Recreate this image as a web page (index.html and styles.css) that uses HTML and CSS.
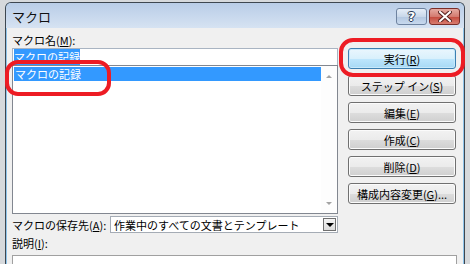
FILE: index.html
```html
<!DOCTYPE html>
<html lang="ja">
<head>
    <meta charset="UTF-8">
    <title>マクロ</title>
    <link rel="stylesheet" href="styles.css">
</head>
<body>
    <div class="window">
        <div class="titlebar">
            <span class="title">マクロ</span>
            <div class="caption-buttons">
                <button class="cap help">?</button>
                <button class="cap close">
                    <svg width="14" height="11" viewBox="0 0 14 11">
                        <path d="M2 1 L12 10 M12 1 L2 10" stroke="#5a2220" stroke-width="4" stroke-linecap="square"/>
                        <path d="M2 1 L12 10 M12 1 L2 10" stroke="#fff" stroke-width="2" stroke-linecap="square"/>
                    </svg>
                </button>
            </div>
        </div>
        <div class="content">
            <div class="main">
                <div class="left">
                    <div class="label">マクロ名(<u>M</u>):</div>
                    <div class="name-input"><span class="sel">マクロの記録</span></div>
                    <div class="listbox">
                        <div class="items">
                            <div class="item selected">マクロの記録</div>
                        </div>
                        <div class="scrollbar">
                            <span class="arrow up"></span>
                            <span class="arrow down"></span>
                        </div>
                    </div>
                    <div class="store-row">
                        <span class="label">マクロの保存先(<u>A</u>):</span>
                        <div class="combo">
                            <span class="combo-text">作業中のすべての文書とテンプレート</span>
                            <span class="combo-btn"><span class="tri"></span></span>
                        </div>
                    </div>
                </div>
                <div class="buttons">
                    <button class="btn default">実行(<u>R</u>)</button>
                    <button class="btn">ステップ イン(<u>S</u>)</button>
                    <button class="btn">編集(<u>E</u>)</button>
                    <button class="btn">作成(<u>C</u>)</button>
                    <button class="btn">削除(<u>D</u>)</button>
                    <button class="btn">構成内容変更(<u>G</u>)...</button>
                </div>
            </div>
            <div class="label desc-label">説明(<u>I</u>):</div>
            <div class="desc-box"></div>
        </div>
    </div>
    <!-- red hand-drawn marks -->
    <svg class="marks" width="470" height="264" viewBox="0 0 470 264">
        <rect x="7" y="62" width="102" height="32" rx="11" fill="none" stroke="#ed1c24" stroke-width="4"/>
        <rect x="341" y="40" width="122" height="35" rx="12" fill="none" stroke="#ed1c24" stroke-width="4"/>
    </svg>
</body>
</html>
```

FILE: styles.css
```css
body {
    margin: 0;
    width: 470px;
    height: 264px;
    overflow: hidden;
    background-color: #d6d9dc;
    font-family: "Noto Sans CJK JP", "Noto Sans", sans-serif;
    font-size: 11px;
    color: #000;
    position: relative;
}
.window {
    margin: 2px 0 0 5px;
    width: 460px;
    height: 270px;
    box-sizing: border-box;
    border: 1px solid #3e4750;
    border-bottom: none;
    border-radius: 6px 6px 0 0;
    padding: 0 1px;
    background-color: #8fc4ea;
}
.titlebar {
    height: 25px;
    display: flex;
    align-items: flex-start;
    justify-content: space-between;
    background: linear-gradient(#b9cde7, #cddcef 70%, #d6e3f2);
    margin: 0 -1px;
    border-radius: 5px 5px 0 0;
}
.title {
    font-size: 13px;
    line-height: 14px;
    margin: 7px 0 0 6px;
    color: #111;
}
.caption-buttons {
    display: flex;
    gap: 2px;
    margin: 5px 4px 0 0;
}
.cap {
    height: 17px;
    padding: 0;
    border-radius: 3px;
    display: flex;
    align-items: center;
    justify-content: center;
}
.help {
    width: 31px;
    border: 1px solid #6e83a0;
    background: linear-gradient(#e6eef8, #c9d8ea 50%, #b3c7e0 51%, #c8d9ee);
    color: #fff;
    font-family: "DejaVu Sans", sans-serif;
    font-weight: bold;
    font-size: 13px;
    text-shadow: 0 0 1px #2a3a55, 1px 0 0 #2a3a55, -1px 0 0 #2a3a55, 0 1px 0 #2a3a55, 0 -1px 0 #2a3a55;
}
.close {
    width: 31px;
    border: 1px solid #7a2d28;
    background: linear-gradient(#e5aaa2, #d47b70 50%, #c4493d 51%, #d77c6e);
}
.content {
    background-color: #f0f0f0;
    height: 240px;
    padding: 5px 6px 0 5px;
}
.main {
    display: grid;
    grid-template-columns: 326px 108px;
    column-gap: 10px;
}
.label {
    line-height: 14px;
    white-space: nowrap;
}
.name-input {
    margin-top: 1px;
    height: 17px;
    box-sizing: border-box;
    border: 1px solid #a9b4c2;
    border-bottom: none;
    background-color: #fff;
    padding: 1px 0 0 1px;
    line-height: 14px;
}
.sel {
    background-color: #3399ff;
    color: #fff;
}
.listbox {
    height: 149px;
    box-sizing: border-box;
    border: 1px solid #828790;
    background-color: #fff;
    display: flex;
}
.items {
    flex: 1;
    padding: 1px 0 0 1px;
}
.item {
    line-height: 14px;
    padding-left: 1px;
}
.item.selected {
    background-color: #3399ff;
    color: #fff;
}
.scrollbar {
    width: 16px;
    background-color: #fdfdfd;
    display: flex;
    flex-direction: column;
    justify-content: space-between;
    align-items: center;
    padding: 9px 0 8px;
    box-sizing: border-box;
}
.arrow {
    width: 0;
    height: 0;
    border-left: 3px solid transparent;
    border-right: 3px solid transparent;
}
.arrow.up {
    border-bottom: 3px solid #a3a3a3;
}
.arrow.down {
    border-top: 3px solid #a3a3a3;
}
.store-row {
    margin-top: 2px;
    display: flex;
    align-items: center;
    justify-content: space-between;
}
.combo {
    width: 228px;
    height: 17px;
    box-sizing: border-box;
    border: 1px solid #a5acb5;
    background-color: #fff;
    display: flex;
    align-items: center;
}
.combo-text {
    flex: 1;
    padding-left: 3px;
    line-height: 14px;
    white-space: nowrap;
    overflow: hidden;
}
.combo-btn {
    width: 13px;
    height: 13px;
    margin-right: 1px;
    box-sizing: border-box;
    border: 1px solid #707070;
    background: linear-gradient(#f4f4f4, #dcdcdc);
    display: flex;
    align-items: center;
    justify-content: center;
}
.tri {
    width: 0;
    height: 0;
    border-left: 4px solid transparent;
    border-right: 4px solid transparent;
    border-top: 4px solid #000;
}
.buttons {
    display: flex;
    flex-direction: column;
    gap: 6px;
    padding-top: 15px;
}
.btn {
    height: 21px;
    padding: 0;
    border: 1px solid #707070;
    border-radius: 3px;
    background: linear-gradient(#f2f2f2, #ebebeb 50%, #dddddd 51%, #cfcfcf);
    box-shadow: inset 0 0 0 1px #fbfbfb;
    font-family: inherit;
    font-size: 11px;
    color: #000;
    line-height: 14px;
    white-space: nowrap;
}
.btn.default {
    border-color: #3c7fb1;
    background: linear-gradient(#eaf6fd, #d9f0fc 50%, #bee6fd 51%, #a7d9f5);
    box-shadow: inset 0 0 0 1px #c8e9fb;
}
.desc-label {
    margin-top: 3px;
}
.desc-box {
    margin-top: 5px;
    height: 20px;
    border: 1px solid #a0a0a0;
    border-bottom: none;
    background-color: #fff;
}
.marks {
    position: absolute;
    top: 0;
    left: 0;
}
```
